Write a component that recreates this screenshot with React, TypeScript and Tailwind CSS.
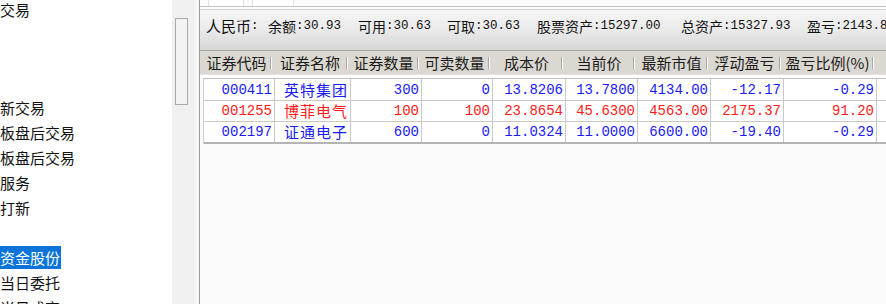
import React from "react";

const cjk = { fontFamily: '"Noto Sans CJK SC", "Noto Sans", sans-serif' };
const mono = { fontFamily: '"Liberation Mono", "Noto Sans CJK SC", monospace' };

const widths = [71, 76, 71, 71, 73, 72, 73, 73, 93, 9];

const headers = ["证券代码", "证券名称", "证券数量", "可卖数量", "成本价", "当前价", "最新市值", "浮动盈亏", "盈亏比例(%)", ""];

const rows = [
  { color: "text-[#1a1aff]", cells: ["000411", "英特集团", "300", "0", "13.8206", "13.7800", "4134.00", "-12.17", "-0.29"] },
  { color: "text-[#ff1a1a]", cells: ["001255", "博菲电气", "100", "100", "23.8654", "45.6300", "4563.00", "2175.37", "91.20"] },
  { color: "text-[#1a1aff]", cells: ["002197", "证通电子", "600", "0", "11.0324", "11.0000", "6600.00", "-19.40", "-0.29"] },
];

const tree = [
  { label: "交易" },
  { label: "" },
  { label: "" },
  { label: "" },
  { label: "新交易" },
  { label: "板盘后交易" },
  { label: "板盘后交易" },
  { label: "服务" },
  { label: "打新" },
  { label: "" },
  { label: "资金股份", selected: true },
  { label: "当日委托" },
  { label: "当日成交" },
];

const info = [
  { label: "人民币", value: "", w: "w-[62px]", big: true },
  { label: "余额", value: "30.93", w: "w-[90px]" },
  { label: "可用", value: "30.63", w: "w-[89px]" },
  { label: "可取", value: "30.63", w: "w-[90px]" },
  { label: "股票资产", value: "15297.00", w: "w-[144px]" },
  { label: "总资产", value: "15327.93", w: "w-[126px]" },
  { label: "盈亏", value: "2143.83", w: "w-[120px]" },
];

export default function App() {
  return (
    <div className="w-[886px] h-[304px] flex overflow-hidden bg-white">
      {/* tree */}
      <div className="w-[172px] shrink-0 flex flex-col bg-white mt-[-3px]" style={cjk}>
        {tree.map((t, i) => (
          <div key={i} className={`${i === 3 ? "h-[23px]" : "h-[25px]"} shrink-0 flex items-center`}>
            {t.label && (
              <span
                className={`text-[15px] leading-[23px] h-[23px] px-[1px] ml-[-1px] ${
                  t.selected ? "bg-[#0a74d8] text-white" : "text-[#111]"
                }`}
              >
                {t.label}
              </span>
            )}
          </div>
        ))}
      </div>

      {/* scrollbar */}
      <div className="w-[23px] shrink-0 bg-[#f0f0f0] pt-[18px] pl-[3px]">
        <div className="w-[13px] h-[87px] border border-[#a9a9a9] bg-[#f3f3f3]" />
      </div>
      <div className="w-[4px] shrink-0 bg-[#f7f7f7]" />

      {/* main */}
      <div className="flex-1 flex flex-col border-l border-[#9c9c9c] bg-[#fafafa] min-w-0">
        <div className="h-[7px] shrink-0 flex bg-[#fbfbfb] border-b border-[#c3c3c3]">
          <div className="w-[8px]" />
          <div className="w-[36px] bg-white border-x border-[#e2e2e2]" />
          <div className="w-[8px]" />
          <div className="w-[42px] bg-white border-x border-[#e2e2e2]" />
        </div>
        <div className="h-[3px] shrink-0 bg-[#fcfcfc] border-b border-[#d2d2d2]" />

        {/* info bar */}
        <div className="h-[41px] shrink-0 flex items-start pt-[7px] pl-[6px] bg-gradient-to-b from-[#f5f5f5] via-[#eaeaea] to-[#d7d7d7] border-b border-[#a6a6a6] whitespace-nowrap">
          {info.map((it) => (
            <div key={it.label} className={`${it.w} shrink-0 flex items-center h-[18px] text-[#111]`}>
              <span className={it.big ? "text-[15px]" : "text-[14px]"} style={cjk}>
                {it.label}
              </span>
              <span className="text-[12.5px]" style={mono}>:{it.value}</span>
            </div>
          ))}
        </div>

        {/* header */}
        <div className="h-[24px] shrink-0 flex bg-[#dbd8d1] pl-[3px] border-b border-[#e6e4df]">
          {headers.map((h, i) => (
            <div
              key={i}
              style={{ width: widths[i], ...cjk }}
              className={`shrink-0 flex items-center ${i === widths.length - 1 ? "flex-1" : ""}`}
            >
              <span className="flex-1 text-center text-[15px] text-[#1b1b1b] leading-[20px]">{h}</span>
              {i < widths.length - 1 && <span className="w-px h-[12px] bg-[#a4a4a4] mr-[2px] border-r border-white box-content" />}
            </div>
          ))}
        </div>
        <div className="h-[3px] shrink-0 bg-white" />

        {/* rows */}
        <div className="ml-[3px] flex flex-col border-t border-[#bdbdbd] border-l border-l-[#d0d0d0] bg-white">
          {rows.map((r, ri) => (
            <div
              key={ri}
              className={`${ri === 0 ? "h-[22px]" : "h-[21px]"} flex ${ri === rows.length - 1 ? "h-[22px] border-b-2 border-[#b4b4b4]" : "border-b border-[#c8c8c8]"} ${r.color}`}
            >
              {widths.map((w, ci) => (
                <div
                  key={ci}
                  style={{ width: w, ...(ci === 1 ? cjk : mono) }}
                  className={`shrink-0 flex items-center justify-end pr-[2px] border-r border-[#c8c8c8] leading-[18px] ${
                    ci === 1 ? "text-[15px] tracking-[1px]" : "text-[14px]"
                  } ${ci === widths.length - 1 ? "flex-1 border-r-0" : ""}`}
                >
                  {r.cells[ci] ?? ""}
                </div>
              ))}
            </div>
          ))}
        </div>
      </div>
    </div>
  );
}
